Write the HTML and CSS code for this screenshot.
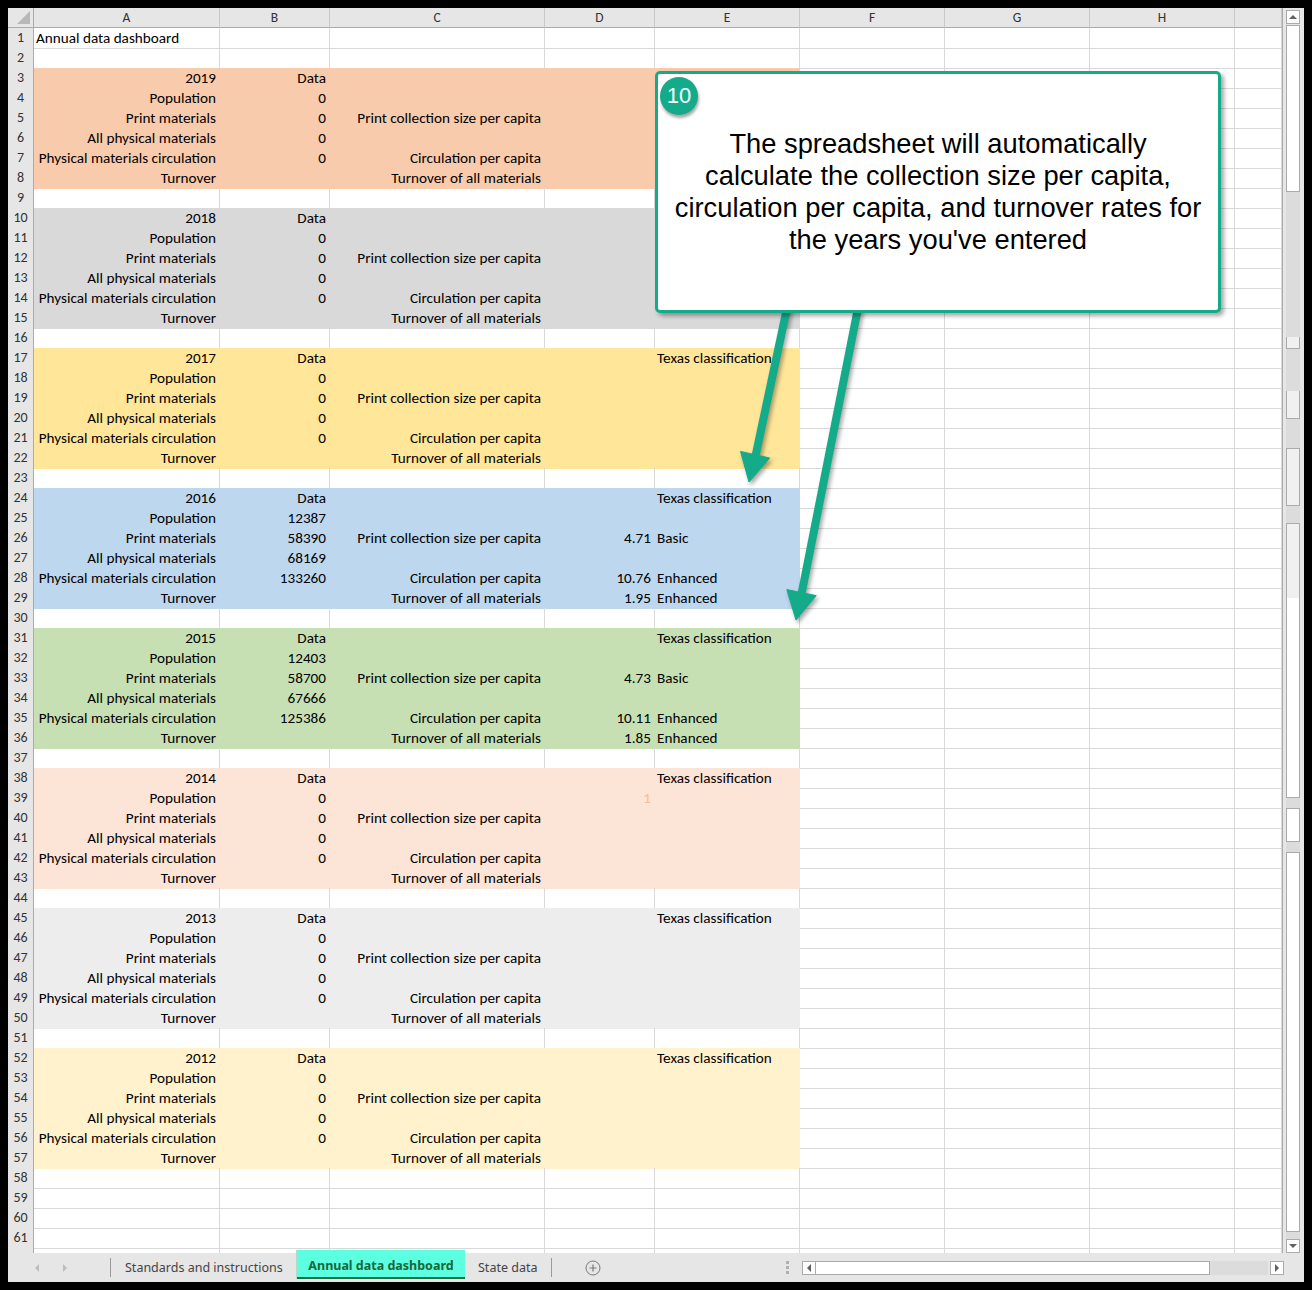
FILE: index.html
```html
<!DOCTYPE html>
<html>
<head>
<meta charset="utf-8">
<title>Annual data dashboard</title>
<link rel="stylesheet" href="styles.css">
</head>
<body>
<div class="frame">
  <div class="main">
    <div class="grid">
      <div class="hd"><b class="corner"><i class="tri"></i></b><span>A</span><span>B</span><span>C</span><span>D</span><span>E</span><span>F</span><span>G</span><span>H</span><span></span></div>
      <div class="r"><b>1</b><span class="l">Annual data dashboard</span><span></span><span></span><span></span><span></span><span></span><span></span><span></span><span></span></div>
      <div class="r"><b>2</b><span></span><span></span><span></span><span></span><span></span><span></span><span></span><span></span><span></span></div>

      <div class="r y19"><b>3</b><span>2019</span><span>Data</span><span></span><span></span><span></span><span></span><span></span><span></span><span></span></div>
      <div class="r y19"><b>4</b><span>Population</span><span>0</span><span></span><span></span><span></span><span></span><span></span><span></span><span></span></div>
      <div class="r y19"><b>5</b><span>Print materials</span><span>0</span><span>Print collection size per capita</span><span></span><span></span><span></span><span></span><span></span><span></span></div>
      <div class="r y19"><b>6</b><span>All physical materials</span><span>0</span><span></span><span></span><span></span><span></span><span></span><span></span><span></span></div>
      <div class="r y19"><b>7</b><span>Physical materials circulation</span><span>0</span><span>Circulation per capita</span><span></span><span></span><span></span><span></span><span></span><span></span></div>
      <div class="r y19"><b>8</b><span>Turnover</span><span></span><span>Turnover of all materials</span><span></span><span></span><span></span><span></span><span></span><span></span></div>
      <div class="r"><b>9</b><span></span><span></span><span></span><span></span><span></span><span></span><span></span><span></span><span></span></div>

      <div class="r y18"><b>10</b><span>2018</span><span>Data</span><span></span><span></span><span></span><span></span><span></span><span></span><span></span></div>
      <div class="r y18"><b>11</b><span>Population</span><span>0</span><span></span><span></span><span></span><span></span><span></span><span></span><span></span></div>
      <div class="r y18"><b>12</b><span>Print materials</span><span>0</span><span>Print collection size per capita</span><span></span><span></span><span></span><span></span><span></span><span></span></div>
      <div class="r y18"><b>13</b><span>All physical materials</span><span>0</span><span></span><span></span><span></span><span></span><span></span><span></span><span></span></div>
      <div class="r y18"><b>14</b><span>Physical materials circulation</span><span>0</span><span>Circulation per capita</span><span></span><span></span><span></span><span></span><span></span><span></span></div>
      <div class="r y18"><b>15</b><span>Turnover</span><span></span><span>Turnover of all materials</span><span></span><span></span><span></span><span></span><span></span><span></span></div>
      <div class="r"><b>16</b><span></span><span></span><span></span><span></span><span></span><span></span><span></span><span></span><span></span></div>

      <div class="r y17"><b>17</b><span>2017</span><span>Data</span><span></span><span></span><span>Texas classification</span><span></span><span></span><span></span><span></span></div>
      <div class="r y17"><b>18</b><span>Population</span><span>0</span><span></span><span></span><span></span><span></span><span></span><span></span><span></span></div>
      <div class="r y17"><b>19</b><span>Print materials</span><span>0</span><span>Print collection size per capita</span><span></span><span></span><span></span><span></span><span></span><span></span></div>
      <div class="r y17"><b>20</b><span>All physical materials</span><span>0</span><span></span><span></span><span></span><span></span><span></span><span></span><span></span></div>
      <div class="r y17"><b>21</b><span>Physical materials circulation</span><span>0</span><span>Circulation per capita</span><span></span><span></span><span></span><span></span><span></span><span></span></div>
      <div class="r y17"><b>22</b><span>Turnover</span><span></span><span>Turnover of all materials</span><span></span><span></span><span></span><span></span><span></span><span></span></div>
      <div class="r"><b>23</b><span></span><span></span><span></span><span></span><span></span><span></span><span></span><span></span><span></span></div>

      <div class="r y16"><b>24</b><span>2016</span><span>Data</span><span></span><span></span><span>Texas classification</span><span></span><span></span><span></span><span></span></div>
      <div class="r y16"><b>25</b><span>Population</span><span>12387</span><span></span><span></span><span></span><span></span><span></span><span></span><span></span></div>
      <div class="r y16"><b>26</b><span>Print materials</span><span>58390</span><span>Print collection size per capita</span><span>4.71</span><span>Basic</span><span></span><span></span><span></span><span></span></div>
      <div class="r y16"><b>27</b><span>All physical materials</span><span>68169</span><span></span><span></span><span></span><span></span><span></span><span></span><span></span></div>
      <div class="r y16"><b>28</b><span>Physical materials circulation</span><span>133260</span><span>Circulation per capita</span><span>10.76</span><span>Enhanced</span><span></span><span></span><span></span><span></span></div>
      <div class="r y16"><b>29</b><span>Turnover</span><span></span><span>Turnover of all materials</span><span>1.95</span><span>Enhanced</span><span></span><span></span><span></span><span></span></div>
      <div class="r"><b>30</b><span></span><span></span><span></span><span></span><span></span><span></span><span></span><span></span><span></span></div>

      <div class="r y15"><b>31</b><span>2015</span><span>Data</span><span></span><span></span><span>Texas classification</span><span></span><span></span><span></span><span></span></div>
      <div class="r y15"><b>32</b><span>Population</span><span>12403</span><span></span><span></span><span></span><span></span><span></span><span></span><span></span></div>
      <div class="r y15"><b>33</b><span>Print materials</span><span>58700</span><span>Print collection size per capita</span><span>4.73</span><span>Basic</span><span></span><span></span><span></span><span></span></div>
      <div class="r y15"><b>34</b><span>All physical materials</span><span>67666</span><span></span><span></span><span></span><span></span><span></span><span></span><span></span></div>
      <div class="r y15"><b>35</b><span>Physical materials circulation</span><span>125386</span><span>Circulation per capita</span><span>10.11</span><span>Enhanced</span><span></span><span></span><span></span><span></span></div>
      <div class="r y15"><b>36</b><span>Turnover</span><span></span><span>Turnover of all materials</span><span>1.85</span><span>Enhanced</span><span></span><span></span><span></span><span></span></div>
      <div class="r"><b>37</b><span></span><span></span><span></span><span></span><span></span><span></span><span></span><span></span><span></span></div>

      <div class="r y14"><b>38</b><span>2014</span><span>Data</span><span></span><span></span><span>Texas classification</span><span></span><span></span><span></span><span></span></div>
      <div class="r y14"><b>39</b><span>Population</span><span>0</span><span></span><span class="faint">1</span><span></span><span></span><span></span><span></span><span></span></div>
      <div class="r y14"><b>40</b><span>Print materials</span><span>0</span><span>Print collection size per capita</span><span></span><span></span><span></span><span></span><span></span><span></span></div>
      <div class="r y14"><b>41</b><span>All physical materials</span><span>0</span><span></span><span></span><span></span><span></span><span></span><span></span><span></span></div>
      <div class="r y14"><b>42</b><span>Physical materials circulation</span><span>0</span><span>Circulation per capita</span><span></span><span></span><span></span><span></span><span></span><span></span></div>
      <div class="r y14"><b>43</b><span>Turnover</span><span></span><span>Turnover of all materials</span><span></span><span></span><span></span><span></span><span></span><span></span></div>
      <div class="r"><b>44</b><span></span><span></span><span></span><span></span><span></span><span></span><span></span><span></span><span></span></div>

      <div class="r y13"><b>45</b><span>2013</span><span>Data</span><span></span><span></span><span>Texas classification</span><span></span><span></span><span></span><span></span></div>
      <div class="r y13"><b>46</b><span>Population</span><span>0</span><span></span><span></span><span></span><span></span><span></span><span></span><span></span></div>
      <div class="r y13"><b>47</b><span>Print materials</span><span>0</span><span>Print collection size per capita</span><span></span><span></span><span></span><span></span><span></span><span></span></div>
      <div class="r y13"><b>48</b><span>All physical materials</span><span>0</span><span></span><span></span><span></span><span></span><span></span><span></span><span></span></div>
      <div class="r y13"><b>49</b><span>Physical materials circulation</span><span>0</span><span>Circulation per capita</span><span></span><span></span><span></span><span></span><span></span><span></span></div>
      <div class="r y13"><b>50</b><span>Turnover</span><span></span><span>Turnover of all materials</span><span></span><span></span><span></span><span></span><span></span><span></span></div>
      <div class="r"><b>51</b><span></span><span></span><span></span><span></span><span></span><span></span><span></span><span></span><span></span></div>

      <div class="r y12"><b>52</b><span>2012</span><span>Data</span><span></span><span></span><span>Texas classification</span><span></span><span></span><span></span><span></span></div>
      <div class="r y12"><b>53</b><span>Population</span><span>0</span><span></span><span></span><span></span><span></span><span></span><span></span><span></span></div>
      <div class="r y12"><b>54</b><span>Print materials</span><span>0</span><span>Print collection size per capita</span><span></span><span></span><span></span><span></span><span></span><span></span></div>
      <div class="r y12"><b>55</b><span>All physical materials</span><span>0</span><span></span><span></span><span></span><span></span><span></span><span></span><span></span></div>
      <div class="r y12"><b>56</b><span>Physical materials circulation</span><span>0</span><span>Circulation per capita</span><span></span><span></span><span></span><span></span><span></span><span></span></div>
      <div class="r y12"><b>57</b><span>Turnover</span><span></span><span>Turnover of all materials</span><span></span><span></span><span></span><span></span><span></span><span></span></div>

      <div class="r"><b>58</b><span></span><span></span><span></span><span></span><span></span><span></span><span></span><span></span><span></span></div>
      <div class="r"><b>59</b><span></span><span></span><span></span><span></span><span></span><span></span><span></span><span></span><span></span></div>
      <div class="r"><b>60</b><span></span><span></span><span></span><span></span><span></span><span></span><span></span><span></span><span></span></div>
      <div class="r"><b>61</b><span></span><span></span><span></span><span></span><span></span><span></span><span></span><span></span><span></span></div>
      <div class="r"><b></b><span></span><span></span><span></span><span></span><span></span><span></span><span></span><span></span><span></span></div>
    </div>
    <div class="vs">
      <div class="vbtn up"><i></i></div>
      <div class="vthumb"></div>
      <div class="vtrack">
        <div class="art a1"></div>
        <div class="art a2"></div>
        <div class="art a3"></div>
        <div class="art a4"></div>
        <div class="art a5"></div>
        <div class="art a6"></div>
      </div>
      <div class="vbtn down"><i></i></div>
    </div>
  </div>

  <div class="tabs">
    <div class="nav"><i class="nl"></i><i class="nr"></i></div>
    <div class="sep"></div>
    <div class="tab t1">Standards and instructions</div>
    <div class="tab active">Annual data dashboard</div>
    <div class="tab t3">State data</div>
    <div class="sep"></div>
    <div class="plus"><svg width="16" height="16" viewBox="0 0 16 16"><circle cx="8" cy="8" r="7" fill="none" stroke="#7a7a7a" stroke-width="1"/><path d="M8 4.5v7M4.5 8h7" stroke="#7a7a7a" stroke-width="1.2"/></svg></div>
    <div class="dots"><i></i><i></i><i></i></div>
    <div class="hs">
      <div class="hbtn"><i class="hl"></i></div>
      <div class="hthumb"></div>
      <div class="htrack"></div>
      <div class="hbtn"><i class="hr"></i></div>
    </div>
  </div>

  <svg class="arrows" width="1312" height="1290" viewBox="0 0 1312 1290">
    <g fill="#14ab8b" stroke="#14ab8b">
      <line x1="787" y1="308" x2="755.5" y2="456" stroke-width="8"/>
      <polygon points="769.7,458 740.5,451.4 749,482" stroke-width="1" stroke-linejoin="round"/>
      <line x1="858" y1="308" x2="801.5" y2="594" stroke-width="8"/>
      <polygon points="816.2,595.6 786.8,589.6 796,620" stroke-width="1" stroke-linejoin="round"/>
    </g>
  </svg>

  <div class="callout">
    <div class="badge">10</div>
    <p>The spreadsheet will automatically<br>calculate the collection size per capita,<br>circulation per capita, and turnover rates for<br>the years you've entered</p>
  </div>
</div>
</body>
</html>
```

FILE: styles.css
```css
* { box-sizing: border-box; }
html, body { margin: 0; padding: 0; }
body { background: #000; width: 1312px; height: 1290px; overflow: hidden; }

.frame {
  position: relative;
  margin: 8px 0 0 8px;
  width: 1296px;
  height: 1274px;
  background: #e6e6e6;
  display: flex;
  flex-direction: column;
}

.main { display: flex; height: 1245px; }

.grid {
  width: 1275px;
  height: 1245px;
  overflow: hidden;
  background: #fff;
  border-right: 1px solid #ababab;
  font-family: Carlito, Calibri, Lato, "Liberation Sans", sans-serif;
  font-size: 15.2px;
  color: #000;
}

.hd, .r {
  display: grid;
  grid-template-columns: 26px 186px 110px 215px 110px 145px 145px 145px 145px 47px;
  height: 20px;
}

.hd span, .hd b {
  background: #e6e6e6;
  border-right: 1px solid #c8c8c8;
  border-bottom: 1px solid #ababab;
  text-align: center;
  line-height: 19px;
  font-weight: normal;
  color: #333;
  font-size: 13.5px;
}
.hd b.corner { position: relative; border-right: 1px solid #ababab; }
.tri {
  position: absolute;
  right: 3px;
  bottom: 3px;
  width: 0; height: 0;
  border-left: 13px solid transparent;
  border-bottom: 13px solid #b8b8b8;
}

.r b {
  background: #e6e6e6;
  border-right: 1px solid #ababab;
  border-bottom: 1px solid #d0d0d0;
  font-weight: normal;
  text-align: center;
  color: #333;
  font-size: 14px;
  line-height: 20px;
}

.r span {
  border-right: 1px solid #d9d9d9;
  border-bottom: 1px solid #d9d9d9;
  line-height: 20px;
  padding: 0 3px;
  white-space: nowrap;
  overflow: hidden;
  text-align: right;
}
.r span:nth-child(6) { text-align: left; padding-left: 2px; }
.r span.l { text-align: left; padding-left: 2px; }
.faint { color: #f7bf94; }

.y19 span:nth-child(-n+6) { background: #f8cbad; border-color: #f8cbad; }
.y18 span:nth-child(-n+6) { background: #d9d9d9; border-color: #d9d9d9; }
.y17 span:nth-child(-n+6) { background: #ffe699; border-color: #ffe699; }
.y16 span:nth-child(-n+6) { background: #bdd7ee; border-color: #bdd7ee; }
.y15 span:nth-child(-n+6) { background: #c6e0b4; border-color: #c6e0b4; }
.y14 span:nth-child(-n+6) { background: #fce4d6; border-color: #fce4d6; }
.y13 span:nth-child(-n+6) { background: #ededed; border-color: #ededed; }
.y12 span:nth-child(-n+6) { background: #fff2cc; border-color: #fff2cc; }

/* vertical scrollbar */
.vs {
  width: 21px;
  display: flex;
  flex-direction: column;
  padding: 2px 4px 0 3px;
}
.vbtn {
  height: 14px;
  background: #fdfdfd;
  border: 1px solid #ababab;
  display: flex;
  align-items: center;
  justify-content: center;
  flex: none;
}
.vbtn i { width: 0; height: 0; border-left: 4px solid transparent; border-right: 4px solid transparent; }
.vbtn.up i { border-bottom: 4px solid #606060; }
.vbtn.down i { border-top: 4px solid #606060; }
.vthumb {
  height: 167px;
  flex: none;
  background: #fff;
  border: 1px solid #ababab;
  margin-top: 1px;
}
.vtrack {
  flex: 1;
  background: #dcdcdc;
  position: relative;
}
.art { position: absolute; left: 0; right: 0; border: 1px solid #ababab; border-top: none; background: #f0f0f0; }
.a1 { top: 145px; height: 12px; }
.a2 { top: 199px; height: 28px; }
.a3 { top: 256px; height: 58px; border-top: 1px solid #ababab; }
.a4 { top: 331px; height: 275px; border-top: 1px solid #ababab; background: linear-gradient(#f0f0f0 0 74px, #fff 74px); }
.a5 { top: 616px; height: 34px; background: #fff; border-top: 1px solid #ababab; }
.a6 { top: 660px; height: 380px; background: #fff; border-top: 1px solid #ababab; }

/* tab bar */
.tabs {
  height: 29px;
  display: flex;
  align-items: center;
  font-family: "Noto Sans", "Open Sans", sans-serif;
  font-size: 12.5px;
  color: #444;
  background: #e6e6e6;
}
.nav { width: 102px; height: 100%; position: relative; display: flex; align-items: center; }
.nav i { width: 0; height: 0; border-top: 4px solid transparent; border-bottom: 4px solid transparent; }
.nl { border-right: 4px solid #bdbdbd; margin-left: 27px; }
.nr { border-left: 4px solid #bdbdbd; margin-left: 24px; }
.sep { width: 1px; height: 19px; background: #9a9a9a; flex: none; }
.tab { height: 100%; line-height: 29px; white-space: nowrap; flex: none; }
.t1 { width: 186px; padding-left: 14px; }
.active {
  width: 168px;
  align-self: flex-start;
  height: 29px;
  margin-top: -3px;
  background: #5cffe0;
  color: #19663a;
  font-weight: bold;
  text-align: center;
  line-height: 31px;
  border-bottom: 2px solid #1c7140;
  box-shadow: -1px 0 0 #b8d8cc;
}
.t3 { width: 86px; padding-left: 13px; }
.plus { width: 16px; height: 16px; margin-left: 33px; flex: none; }
.plus svg { display: block; }
.dots { margin-left: 185px; width: 3px; display: flex; flex-direction: column; gap: 2px; }
.dots i { width: 3px; height: 3px; background: #b0b0b0; display: block; }
.hs {
  margin-left: 13px;
  width: 482px;
  height: 14px;
  display: flex;
}
.hbtn {
  width: 14px;
  flex: none;
  background: #fdfdfd;
  border: 1px solid #ababab;
  display: flex;
  align-items: center;
  justify-content: center;
}
.hbtn i { width: 0; height: 0; border-top: 4px solid transparent; border-bottom: 4px solid transparent; }
.hl { border-right: 4px solid #606060; }
.hr { border-left: 4px solid #606060; }
.hthumb { width: 394px; flex: none; background: #fff; border: 1px solid #ababab; border-left: none; }
.htrack { flex: 1; background: #dcdcdc; margin-right: 2px; }

/* overlays */
.arrows {
  position: absolute;
  left: -8px;
  top: -8px;
  pointer-events: none;
  filter: drop-shadow(2px 3px 2px rgba(0,0,0,0.35));
}
.callout {
  position: absolute;
  left: 647px;
  top: 63px;
  width: 566px;
  height: 242px;
  background: #fff;
  border: 3px solid #14ab8b;
  border-radius: 5px;
  box-shadow: 3px 3px 4px rgba(0,0,0,0.35);
  text-align: center;
  font-family: "Liberation Sans", Arial, sans-serif;
  font-size: 27.3px;
  line-height: 32px;
  color: #000;
}
.callout p { margin: 54px 0 0; padding: 0; white-space: nowrap; }
.badge {
  position: absolute;
  left: 2px;
  top: 3px;
  width: 38px;
  height: 38px;
  border-radius: 50%;
  background: #14ab8b;
  color: #fff;
  font-size: 22px;
  line-height: 38px;
  text-align: center;
  box-shadow: 1px 3px 3px rgba(0,0,0,0.35);
}
```
